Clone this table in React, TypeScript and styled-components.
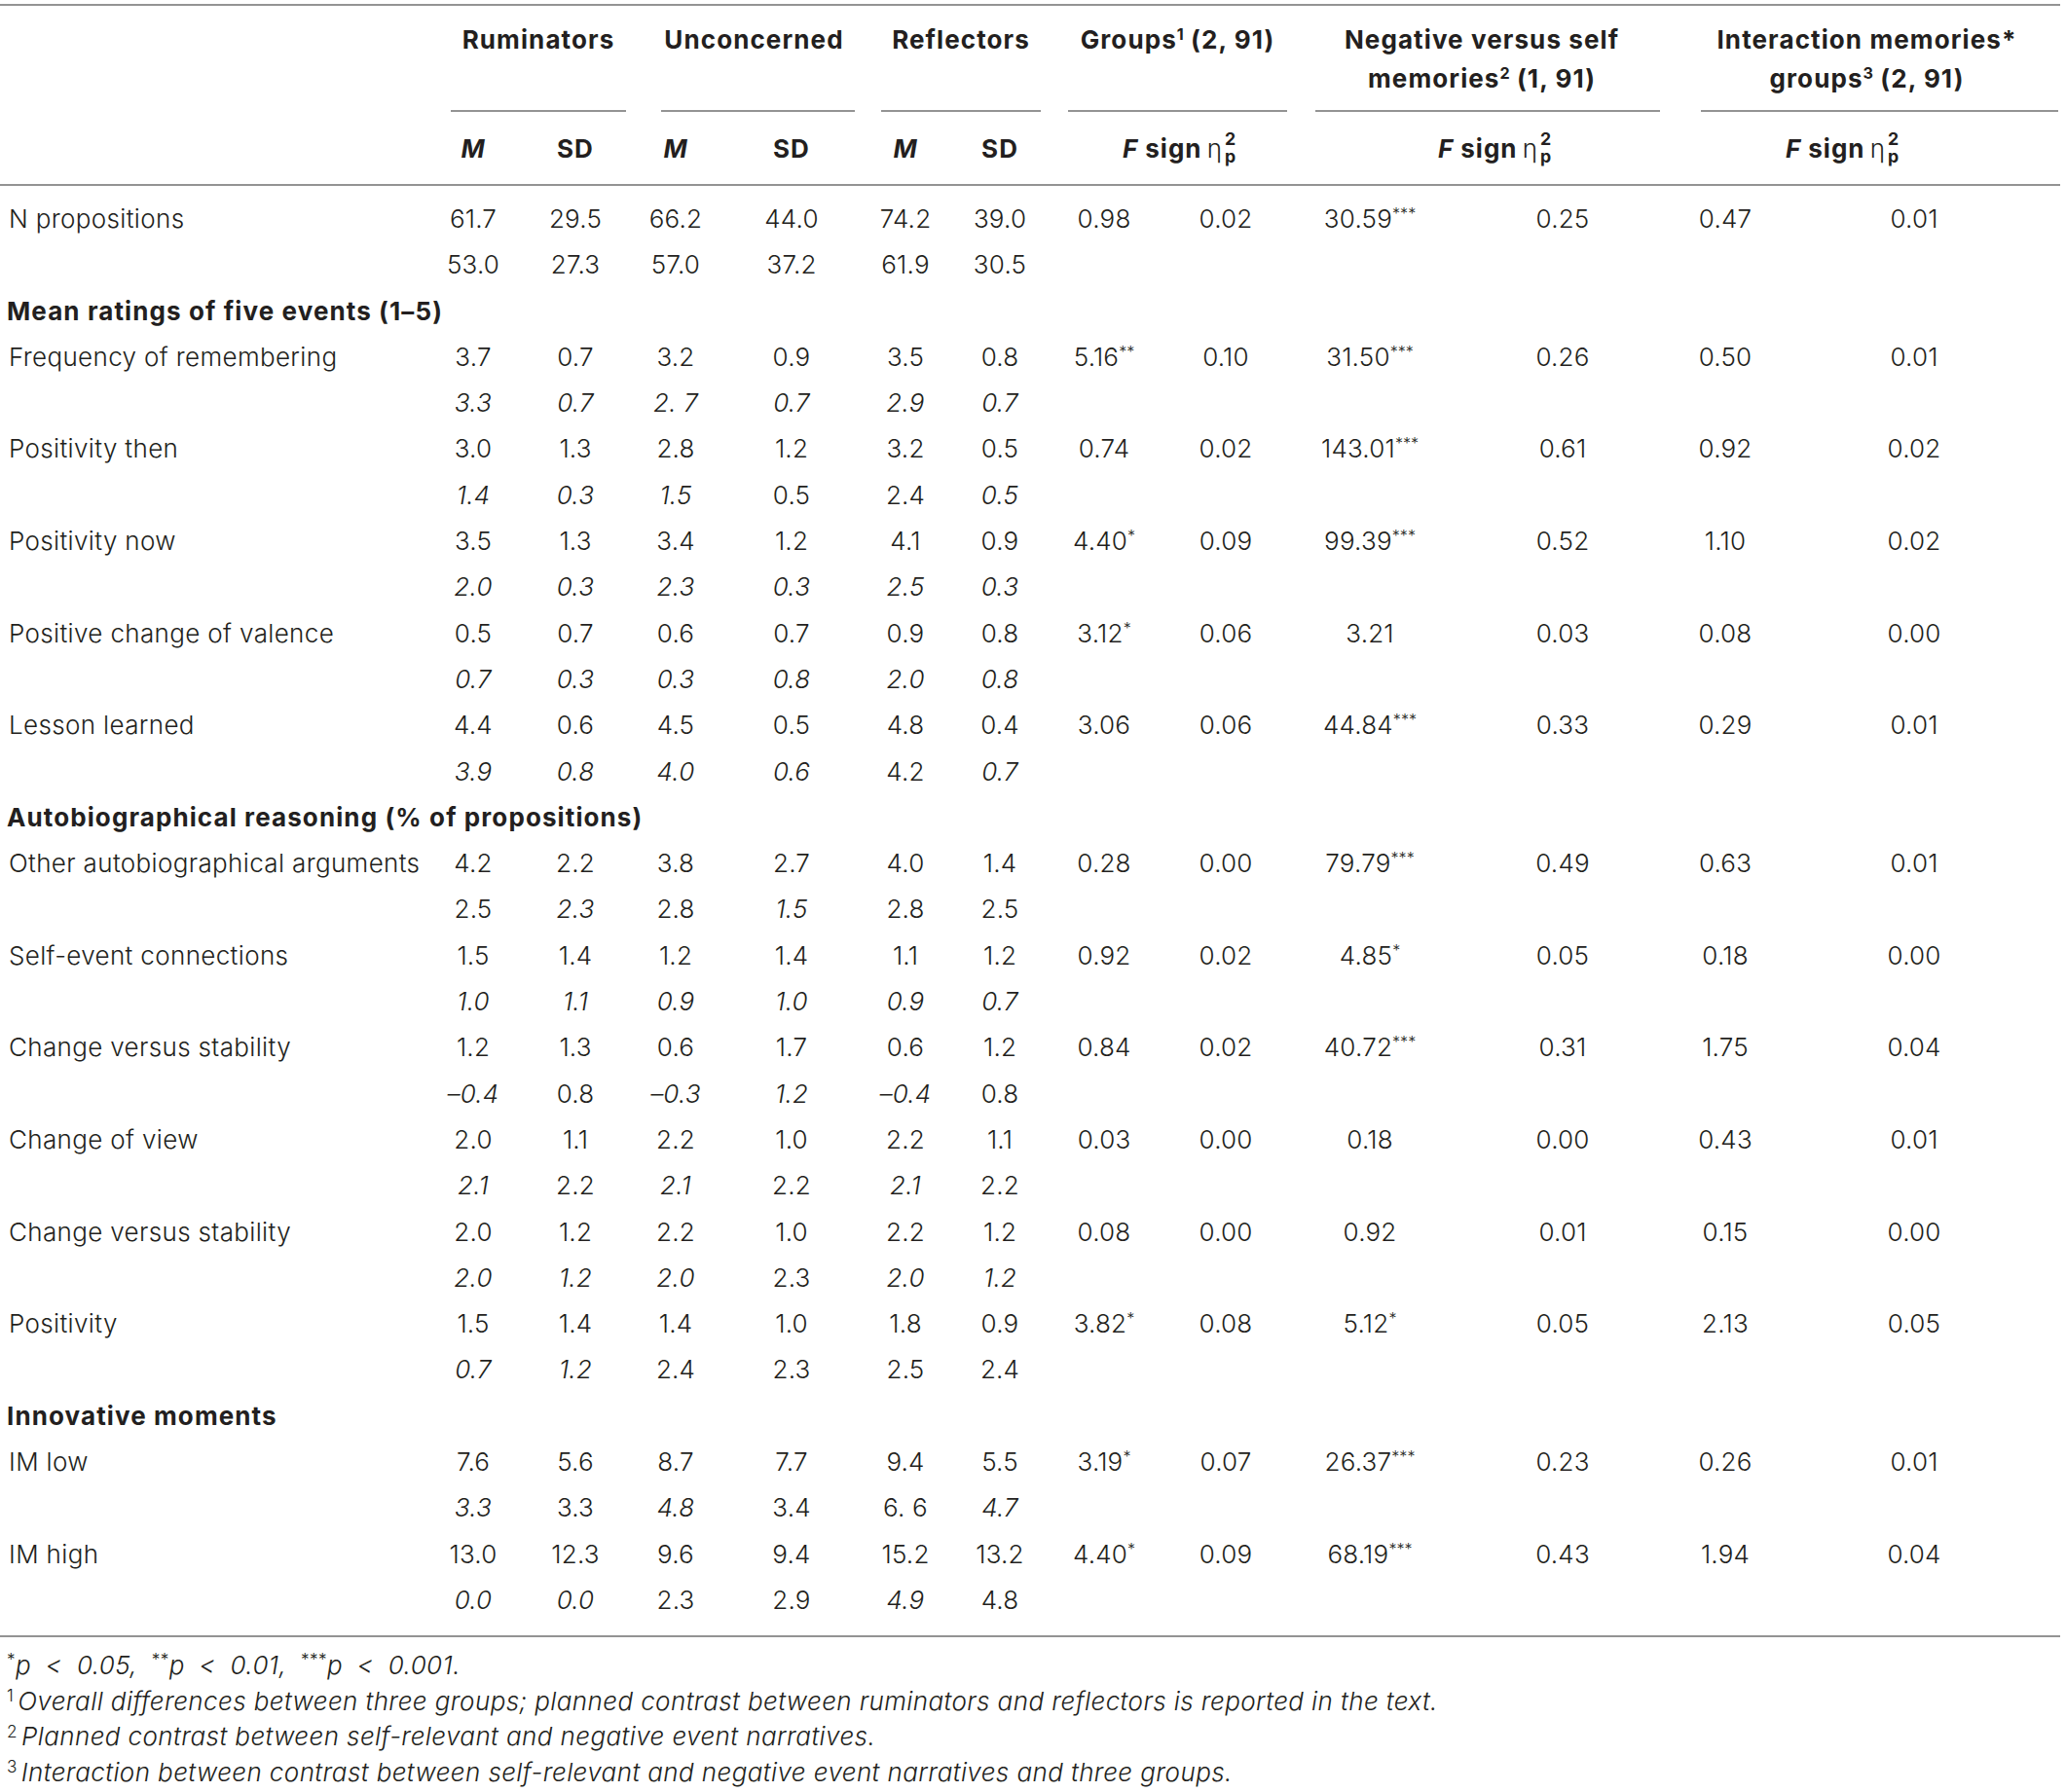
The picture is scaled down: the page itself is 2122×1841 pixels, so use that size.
import React from "react";
import styled, { createGlobalStyle } from "styled-components";

const FONT = `"Inter", "Liberation Sans", Arial, sans-serif`;
const LINE = "#939393";
const INK = "#231f20";

const GlobalStyle = createGlobalStyle`
  html, body { margin: 0; padding: 0; background: #ffffff; }
  body { font-family: ${FONT}; color: ${INK}; }
`;

const Page = styled.div`
  width: 2122px;
  padding-top: 4px;
  background: #ffffff;
`;

const Table = styled.table`
  width: 2116px;
  table-layout: fixed;
  border-collapse: collapse;
  border-top: 2px solid ${LINE};
  border-bottom: 2px solid ${LINE};
  font-size: 26px;
  font-weight: 300;
  letter-spacing: 0.35px;
  color: ${INK};

  tbody tr:first-child td {
    padding-top: 10px;
  }
  tbody tr:last-child td {
    padding-bottom: 13px;
  }
`;

const Col = styled.col<{ $w: number }>`
  width: ${(p) => p.$w}px;
`;

const GroupTh = styled.th<{ $pl: number; $pr: number }>`
  padding: 0 ${(p) => p.$pr}px 0 ${(p) => p.$pl}px;
  vertical-align: top;
  font-weight: 700;
`;

const GroupLabel = styled.div<{ $textPad?: number }>`
  box-sizing: border-box;
  height: 109px;
  padding: 15px ${(p) => p.$textPad ?? 0}px 0 0;
  border-bottom: 2px solid ${LINE};
  line-height: 40px;
  text-align: center;
  white-space: nowrap;
  font-weight: 700;
  letter-spacing: 1.1px;
`;

const EmptyTh = styled.th`
  padding: 0;
`;

const SubTh = styled.th<{ $padL?: number; $padR?: number }>`
  padding: 18px ${(p) => p.$padR ?? 0}px 16px ${(p) => p.$padL ?? 0}px;
  height: 40px;
  line-height: 40px;
  text-align: center;
  vertical-align: top;
  font-weight: 700;
  letter-spacing: 1px;
  white-space: nowrap;
  border-bottom: 2px solid ${LINE};
`;

const SubEmpty = styled.th`
  border-bottom: 2px solid ${LINE};
  padding: 0;
`;

const Sup = styled.sup`
  font-size: 0.62em;
  vertical-align: 0.55em;
  line-height: 0;
  letter-spacing: 0;
`;

const Eta = styled.span`
  font-weight: 300;
  margin-left: 0.2em;
`;

const Scripts = styled.span`
  display: inline-flex;
  flex-direction: column;
  align-items: flex-start;
  height: 0;
  vertical-align: 0.72em;
  font-size: 0.68em;
  line-height: 0.98em;
  font-weight: 700;
  letter-spacing: 0;
  margin-left: 2px;
`;

const LabelTd = styled.td`
  padding: 0 0 0 9px;
  line-height: 47.3px;
  white-space: nowrap;
  text-align: left;
`;

const SectionTd = styled.td`
  padding: 0 0 0 7px;
  line-height: 47.3px;
  white-space: nowrap;
  text-align: left;
  font-weight: 700;
  letter-spacing: 1.1px;
`;

const NumTd = styled.td<{ $italic?: boolean }>`
  padding: 0;
  line-height: 47.3px;
  white-space: nowrap;
  text-align: center;
  letter-spacing: 0.2px;
  font-style: ${(p) => (p.$italic ? "italic" : "normal")};
`;

const Notes = styled.div`
  display: flex;
  flex-direction: column;
  padding: 11px 0 0 7px;
  font-size: 26px;
  font-weight: 300;
  font-style: italic;
  line-height: 36.5px;
  letter-spacing: 0.4px;
  color: ${INK};
`;

const Note = styled.div<{ $wordGap?: number }>`
  white-space: nowrap;
  word-spacing: ${(p) => p.$wordGap ?? 0}px;
`;

const NoteMark = styled.span`
  font-style: normal;
  font-size: 0.66em;
  vertical-align: 0.5em;
  line-height: 0;
  margin-right: 4px;
`;

const StarMark = styled.span`
  font-style: normal;
  font-size: 0.66em;
  vertical-align: 0.5em;
  line-height: 0;
`;

type DataRow = { label: string; main: string[]; alt: string[] };
type Block = { section?: string; rows: DataRow[] };

const COLS = [440, 92, 118, 88, 150, 84, 110, 104, 146, 150, 246, 88, 300];

const BLOCKS: Block[] = [
  {
    rows: [
      {
        label: "N propositions",
        main: ["61.7", "29.5", "66.2", "44.0", "74.2", "39.0", "0.98", "0.02", "30.59***", "0.25", "0.47", "0.01"],
        alt: ["53.0", "27.3", "57.0", "37.2", "61.9", "30.5"],
      },
    ],
  },
  {
    section: "Mean ratings of five events (1–5)",
    rows: [
      {
        label: "Frequency of remembering",
        main: ["3.7", "0.7", "3.2", "0.9", "3.5", "0.8", "5.16**", "0.10", "31.50***", "0.26", "0.50", "0.01"],
        alt: ["/3.3", "/0.7", "/2. 7", "/0.7", "/2.9", "/0.7"],
      },
      {
        label: "Positivity then",
        main: ["3.0", "1.3", "2.8", "1.2", "3.2", "0.5", "0.74", "0.02", "143.01***", "0.61", "0.92", "0.02"],
        alt: ["/1.4", "/0.3", "/1.5", "0.5", "2.4", "/0.5"],
      },
      {
        label: "Positivity now",
        main: ["3.5", "1.3", "3.4", "1.2", "4.1", "0.9", "4.40*", "0.09", "99.39***", "0.52", "1.10", "0.02"],
        alt: ["/2.0", "/0.3", "/2.3", "/0.3", "/2.5", "/0.3"],
      },
      {
        label: "Positive change of valence",
        main: ["0.5", "0.7", "0.6", "0.7", "0.9", "0.8", "3.12*", "0.06", "3.21", "0.03", "0.08", "0.00"],
        alt: ["/0.7", "/0.3", "/0.3", "/0.8", "/2.0", "/0.8"],
      },
      {
        label: "Lesson learned",
        main: ["4.4", "0.6", "4.5", "0.5", "4.8", "0.4", "3.06", "0.06", "44.84***", "0.33", "0.29", "0.01"],
        alt: ["/3.9", "/0.8", "/4.0", "/0.6", "4.2", "/0.7"],
      },
    ],
  },
  {
    section: "Autobiographical reasoning (% of propositions)",
    rows: [
      {
        label: "Other autobiographical arguments",
        main: ["4.2", "2.2", "3.8", "2.7", "4.0", "1.4", "0.28", "0.00", "79.79***", "0.49", "0.63", "0.01"],
        alt: ["2.5", "/2.3", "2.8", "/1.5", "2.8", "2.5"],
      },
      {
        label: "Self-event connections",
        main: ["1.5", "1.4", "1.2", "1.4", "1.1", "1.2", "0.92", "0.02", "4.85*", "0.05", "0.18", "0.00"],
        alt: ["/1.0", "/1.1", "/0.9", "/1.0", "/0.9", "/0.7"],
      },
      {
        label: "Change versus stability",
        main: ["1.2", "1.3", "0.6", "1.7", "0.6", "1.2", "0.84", "0.02", "40.72***", "0.31", "1.75", "0.04"],
        alt: ["/–0.4", "0.8", "/–0.3", "/1.2", "/–0.4", "0.8"],
      },
      {
        label: "Change of view",
        main: ["2.0", "1.1", "2.2", "1.0", "2.2", "1.1", "0.03", "0.00", "0.18", "0.00", "0.43", "0.01"],
        alt: ["/2.1", "2.2", "/2.1", "2.2", "/2.1", "2.2"],
      },
      {
        label: "Change versus stability",
        main: ["2.0", "1.2", "2.2", "1.0", "2.2", "1.2", "0.08", "0.00", "0.92", "0.01", "0.15", "0.00"],
        alt: ["/2.0", "/1.2", "/2.0", "2.3", "/2.0", "/1.2"],
      },
      {
        label: "Positivity",
        main: ["1.5", "1.4", "1.4", "1.0", "1.8", "0.9", "3.82*", "0.08", "5.12*", "0.05", "2.13", "0.05"],
        alt: ["/0.7", "/1.2", "2.4", "2.3", "2.5", "2.4"],
      },
    ],
  },
  {
    section: "Innovative moments",
    rows: [
      {
        label: "IM low",
        main: ["7.6", "5.6", "8.7", "7.7", "9.4", "5.5", "3.19*", "0.07", "26.37***", "0.23", "0.26", "0.01"],
        alt: ["/3.3", "3.3", "/4.8", "3.4", "6. 6", "/4.7"],
      },
      {
        label: "IM high",
        main: ["13.0", "12.3", "9.6", "9.4", "15.2", "13.2", "4.40*", "0.09", "68.19***", "0.43", "1.94", "0.04"],
        alt: ["/0.0", "/0.0", "2.3", "2.9", "/4.9", "4.8"],
      },
    ],
  },
];

function Value({ raw }: { raw: string }) {
  const italic = raw.startsWith("/");
  const text = italic ? raw.slice(1) : raw;
  const m = text.match(/^(.*?)(\*+)$/);
  return (
    <NumTd $italic={italic}>
      {m ? (
        <>
          {m[1]}
          <Sup>{m[2]}</Sup>
        </>
      ) : (
        text
      )}
    </NumTd>
  );
}

function FSign() {
  return (
    <>
      <i>F</i> sign
      <Eta>η</Eta>
      <Scripts>
        <span>2</span>
        <span>p</span>
      </Scripts>
    </>
  );
}

export default function App() {
  return (
    <Page>
      <GlobalStyle />
      <Table>
        <colgroup>
          {COLS.map((w, i) => (
            <Col key={i} $w={w} />
          ))}
        </colgroup>
        <thead>
          <tr>
            <EmptyTh />
            <GroupTh colSpan={2} $pl={23} $pr={7}>
              <GroupLabel>Ruminators</GroupLabel>
            </GroupTh>
            <GroupTh colSpan={2} $pl={29} $pr={10}>
              <GroupLabel $textPad={8}>Unconcerned</GroupLabel>
            </GroupTh>
            <GroupTh colSpan={2} $pl={17} $pr={13}>
              <GroupLabel>Reflectors</GroupLabel>
            </GroupTh>
            <GroupTh colSpan={2} $pl={15} $pr={10}>
              <GroupLabel>
                Groups<Sup>1</Sup> (2, 91)
              </GroupLabel>
            </GroupTh>
            <GroupTh colSpan={2} $pl={19} $pr={23}>
              <GroupLabel $textPad={12}>
                Negative versus self
                <br />
                memories<Sup>2</Sup> (1, 91)
              </GroupLabel>
            </GroupTh>
            <GroupTh colSpan={2} $pl={19} $pr={2}>
              <GroupLabel $textPad={26}>
                Interaction memories*
                <br />
                groups<Sup>3</Sup> (2, 91)
              </GroupLabel>
            </GroupTh>
          </tr>
          <tr>
            <SubEmpty />
            <SubTh>
              <i>M</i>
            </SubTh>
            <SubTh>SD</SubTh>
            <SubTh>
              <i>M</i>
            </SubTh>
            <SubTh>SD</SubTh>
            <SubTh>
              <i>M</i>
            </SubTh>
            <SubTh>SD</SubTh>
            <SubTh colSpan={2} $padL={8}>
              <FSign />
            </SubTh>
            <SubTh colSpan={2} $padL={10}>
              <FSign />
            </SubTh>
            <SubTh colSpan={2} $padR={60}>
              <FSign />
            </SubTh>
          </tr>
        </thead>
        <tbody>
          {BLOCKS.map((block, bi) => (
            <React.Fragment key={bi}>
              {block.section && (
                <tr>
                  <SectionTd colSpan={13}>{block.section}</SectionTd>
                </tr>
              )}
              {block.rows.map((row, ri) => (
                <React.Fragment key={ri}>
                  <tr>
                    <LabelTd>{row.label}</LabelTd>
                    {row.main.map((v, i) => (
                      <Value key={i} raw={v} />
                    ))}
                  </tr>
                  <tr>
                    <LabelTd />
                    {row.alt.map((v, i) => (
                      <Value key={i} raw={v} />
                    ))}
                    {Array.from({ length: 6 }).map((_, i) => (
                      <NumTd key={`e${i}`} />
                    ))}
                  </tr>
                </React.Fragment>
              ))}
            </React.Fragment>
          ))}
        </tbody>
      </Table>
      <Notes>
        <Note $wordGap={7}>
          <StarMark>*</StarMark>p &lt; 0.05, <StarMark>**</StarMark>p &lt; 0.01, <StarMark>***</StarMark>p &lt; 0.001.
        </Note>
        <Note>
          <NoteMark>1</NoteMark>Overall differences between three groups; planned contrast between ruminators and
          reflectors is reported in the text.
        </Note>
        <Note>
          <NoteMark>2</NoteMark>Planned contrast between self-relevant and negative event narratives.
        </Note>
        <Note>
          <NoteMark>3</NoteMark>Interaction between contrast between self-relevant and negative event narratives and
          three groups.
        </Note>
      </Notes>
    </Page>
  );
}
